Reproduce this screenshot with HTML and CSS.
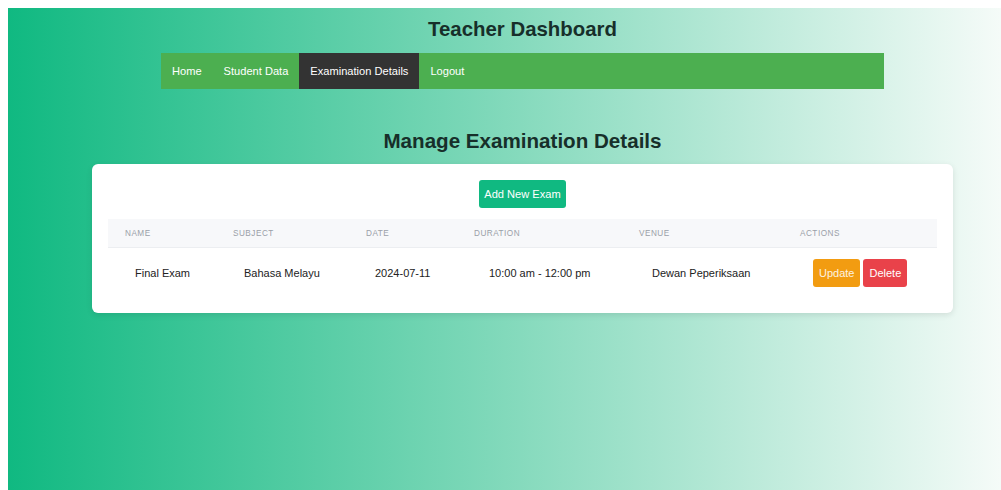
FILE: index.html
```html
<!DOCTYPE html>
<html lang="en">
<head>
<meta charset="utf-8">
<title>Teacher Dashboard</title>
<link rel="stylesheet" href="styles.css">
</head>
<body>
<div class="page">
  <h1 class="site-title">Teacher Dashboard</h1>
  <nav class="navbar">
    <a class="nav-link" href="#">Home</a>
    <a class="nav-link" href="#">Student Data</a>
    <a class="nav-link active" href="#">Examination Details</a>
    <a class="nav-link" href="#">Logout</a>
  </nav>

  <h2 class="section-title">Manage Examination Details</h2>

  <section class="card">
    <div class="toolbar">
      <button class="btn btn-add" type="button">Add New Exam</button>
    </div>
    <table class="exam-table">
      <colgroup>
        <col class="col-name">
        <col class="col-subject">
        <col class="col-date">
        <col class="col-duration">
        <col class="col-venue">
        <col class="col-actions">
      </colgroup>
      <thead>
        <tr>
          <th>Name</th>
          <th>Subject</th>
          <th>Date</th>
          <th>Duration</th>
          <th>Venue</th>
          <th>Actions</th>
        </tr>
      </thead>
      <tbody>
        <tr>
          <td class="cell-name">Final Exam</td>
          <td>Bahasa Melayu</td>
          <td class="cell-date">2024-07-11</td>
          <td class="cell-duration">10:00 am - 12:00 pm</td>
          <td class="cell-venue">Dewan Peperiksaan</td>
          <td class="cell-actions">
            <div class="actions">
              <button class="btn btn-update" type="button">Update</button>
              <button class="btn btn-delete" type="button">Delete</button>
            </div>
          </td>
        </tr>
      </tbody>
    </table>
  </section>
</div>
</body>
</html>
```

FILE: styles.css
```css
html, body {
  margin: 0;
  padding: 0;
  background: #ffffff;
  overflow: hidden;
}

body {
  font-family: "Liberation Sans", Arial, sans-serif;
  color: #222222;
}

.page {
  margin: 8px 0 0 8px;
  min-height: 482px;
  box-sizing: border-box;
  padding: 9px 0 0 36px;
  background: linear-gradient(to right, #10b981 0%, #82d9bb 50%, #f5fbf8 100%);
  display: flex;
  flex-direction: column;
  align-items: center;
}

.site-title {
  margin: 0;
  font-size: 20.4px;
  line-height: 24px;
  font-weight: 700;
  color: #172f2a;
}

.navbar {
  margin-top: 12px;
  width: 723px;
  height: 36px;
  background: #4caf50;
  display: flex;
  align-items: stretch;
}

.nav-link {
  display: flex;
  align-items: center;
  padding: 0 11px;
  font-size: 11.1px;
  color: #ffffff;
  text-decoration: none;
}

.nav-link.active {
  background: #333333;
}

.section-title {
  margin: 40px 0 0;
  font-size: 20.6px;
  line-height: 24px;
  font-weight: 700;
  color: #172f2a;
}

.card {
  margin-top: 11px;
  width: 861px;
  box-sizing: border-box;
  padding: 16px;
  background: #ffffff;
  border-radius: 6px;
  box-shadow: 0 2px 6px rgba(0, 0, 0, 0.10);
}

.toolbar {
  display: flex;
  justify-content: center;
  margin-bottom: 11px;
}

.btn {
  height: 28px;
  padding: 0 5px;
  border: none;
  border-radius: 3px;
  font-family: "Liberation Sans", Arial, sans-serif;
  font-size: 11px;
  color: #ffffff;
  cursor: pointer;
}

.btn-add {
  background: #10b981;
  padding: 0 5px;
  font-size: 11.1px;
}

.btn-update {
  background: #f29c11;
  padding: 0 6px;
  color: #fdf3e1;
}

.btn-delete {
  background: #e9424a;
  padding: 0 6px;
}

.exam-table {
  width: 100%;
  border-collapse: collapse;
  table-layout: fixed;
}

.col-name { width: 108px; }
.col-subject { width: 133px; }
.col-date { width: 108px; }
.col-duration { width: 165px; }
.col-venue { width: 161px; }

.exam-table thead tr {
  background: #f7f8fa;
  border-bottom: 1px solid #eceef1;
}

.exam-table th {
  height: 28px;
  padding: 0 0 0 17px;
  text-align: left;
  font-size: 8.2px;
  font-weight: 400;
  letter-spacing: 0.5px;
  text-transform: uppercase;
  color: #9aa0a8;
}

.exam-table td {
  height: 49px;
  padding: 0 0 0 28px;
  font-size: 11px;
  color: #222222;
  white-space: nowrap;
}

.exam-table td.cell-name { padding-left: 27px; }
.exam-table td.cell-date { padding-left: 26px; }
.exam-table td.cell-duration { padding-left: 32px; }
.exam-table td.cell-venue { padding-left: 30px; }
.exam-table td.cell-actions { padding-left: 30px; }

.actions {
  display: flex;
  gap: 3px;
}
```
